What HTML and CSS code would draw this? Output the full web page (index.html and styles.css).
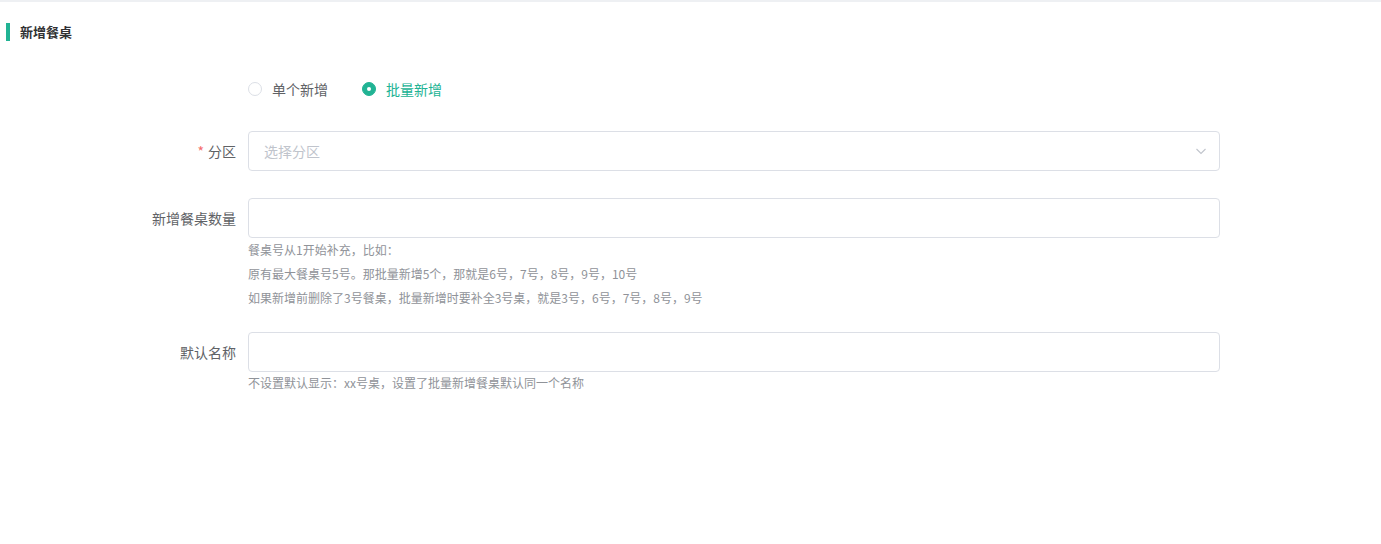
FILE: index.html
```html
<!DOCTYPE html>
<html>
<head>
    <meta charset="utf-8">
    <link rel="stylesheet" href="styles.css">
</head>
<body>
    <div class="page">
        <div class="page-header">
            <h3 class="page-title">新增餐桌</h3>
        </div>
        <form class="form">
            <div class="form-item">
                <div class="form-label"></div>
                <div class="form-content radio-group">
                    <label class="radio">
                        <span class="radio-input"></span>
                        <span class="radio-label">单个新增</span>
                    </label>
                    <label class="radio is-checked">
                        <span class="radio-input"></span>
                        <span class="radio-label">批量新增</span>
                    </label>
                </div>
            </div>
            <div class="form-item form-item-select">
                <label class="form-label is-required">分区</label>
                <div class="form-content">
                    <div class="select">
                        <span class="placeholder">选择分区</span>
                        <svg class="select-arrow" width="12" height="12" viewBox="0 0 12 12">
                            <path d="M1.5 4 L6 8.5 L10.5 4" fill="none" stroke="#c0c4cc" stroke-width="1.1"/>
                        </svg>
                    </div>
                </div>
            </div>
            <div class="form-item">
                <label class="form-label">新增餐桌数量</label>
                <div class="form-content">
                    <input class="input" type="text">
                    <div class="form-tip">
                        <p>餐桌号从1开始补充，比如：</p>
                        <p>原有最大餐桌号5号。那批量新增5个，那就是6号，7号，8号，9号，10号</p>
                        <p>如果新增前删除了3号餐桌，批量新增时要补全3号桌，就是3号，6号，7号，8号，9号</p>
                    </div>
                </div>
            </div>
            <div class="form-item">
                <label class="form-label">默认名称</label>
                <div class="form-content">
                    <input class="input" type="text">
                    <div class="form-tip form-tip-single">
                        <p>不设置默认显示：xx号桌，设置了批量新增餐桌默认同一个名称</p>
                    </div>
                </div>
            </div>
        </form>
    </div>
</body>
</html>
```

FILE: styles.css
```css
body {
    margin: 0;
    font-family: "Noto Sans CJK SC", "Liberation Sans", sans-serif;
    background-color: #fff;
    color: #606266;
}
.page {
    border-top: 2px solid #eef0f3;
    min-height: 542px;
}
.page-header {
    padding: 21px 0 0 6px;
}
.page-title {
    margin: 0;
    padding-left: 10px;
    border-left: 4px solid #21b394;
    font-size: 13px;
    line-height: 18px;
    font-weight: bold;
    color: #303133;
}
.form {
    margin-top: 28px;
}
.form-item {
    display: flex;
    margin-bottom: 22px;
}
.form-item-select {
    margin-bottom: 27px;
}
.form-label {
    width: 248px;
    box-sizing: border-box;
    padding-right: 12px;
    text-align: right;
    font-size: 14px;
    line-height: 40px;
    color: #606266;
    flex-shrink: 0;
}
.form-label.is-required::before {
    content: "*";
    color: #f56c6c;
    margin-right: 4px;
}
.form-content {
    width: 972px;
}
.radio-group {
    display: flex;
    align-items: center;
    height: 40px;
}
.radio {
    display: flex;
    align-items: center;
    margin-right: 34px;
    font-size: 14px;
    color: #606266;
    cursor: pointer;
}
.radio-input {
    width: 14px;
    height: 14px;
    box-sizing: border-box;
    border: 1px solid #dcdfe6;
    border-radius: 50%;
    background-color: #fff;
    position: relative;
}
.radio-label {
    padding-left: 10px;
    line-height: 20px;
}
.radio.is-checked .radio-input {
    border-color: #21b394;
    background-color: #21b394;
}
.radio.is-checked .radio-input::after {
    content: "";
    position: absolute;
    left: 4px;
    top: 4px;
    width: 4px;
    height: 4px;
    border-radius: 50%;
    background-color: #fff;
}
.radio.is-checked .radio-label {
    color: #21b394;
}
.select,
.input {
    display: flex;
    align-items: center;
    justify-content: space-between;
    width: 100%;
    height: 40px;
    box-sizing: border-box;
    padding: 0 15px;
    border: 1px solid #dcdfe6;
    border-radius: 4px;
    background-color: #fff;
    font-family: inherit;
    font-size: 14px;
    color: #606266;
    outline: none;
}
.placeholder {
    color: #c0c4cc;
}
.select-arrow {
    margin-right: -3px;
}
.form-tip {
    font-size: 12px;
    color: #909399;
}
.form-tip p {
    margin: 0;
    line-height: 24px;
}
.form-tip-single p {
    line-height: 22px;
}
```
